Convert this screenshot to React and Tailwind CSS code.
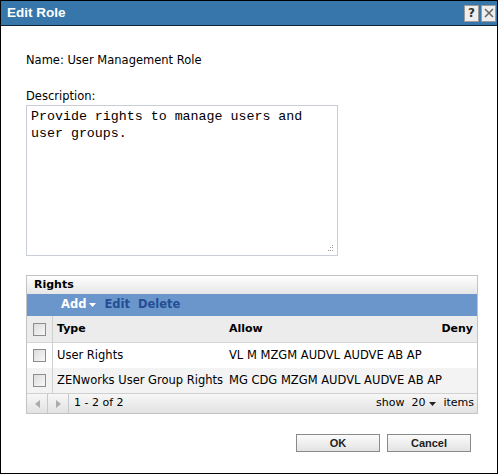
import React from 'react';

const Check = () => (
  <span className="inline-block w-[13px] h-[13px] border border-[#8d8d8d] bg-gradient-to-br from-[#dcdcdc] to-[#f8f8f8]" />
);

const rows = [
  { type: 'User Rights', allow: 'VL M MZGM AUDVL AUDVE AB AP', bg: 'bg-white' },
  { type: 'ZENworks User Group Rights', allow: 'MG CDG MZGM AUDVL AUDVE AB AP', bg: 'bg-[#f3f3f3]' }
];

export default function App() {
  return (
    <div
      className="w-[498px] h-[474px] border border-black bg-white flex flex-col text-[11.5px] text-black"
      style={{ fontFamily: '"DejaVu Sans", Verdana, sans-serif' }}
    >
      {/* title bar */}
      <div className="h-[25px] bg-[#3676aa] border-b border-[#0f2238] flex items-center justify-between pl-[6px] pr-[1px]">
        <span
          className="text-white text-[13.5px] font-bold"
          style={{ fontFamily: '"Liberation Sans", Arial, sans-serif' }}
        >
          Edit Role
        </span>
        <div className="flex gap-[2px]">
          <span className="w-[15px] h-[17px] bg-[#eeeeee] border border-[#9a9a9a] flex items-center justify-center text-[12px] font-bold text-[#333]">?</span>
          <span className="w-[15px] h-[17px] bg-[#eeeeee] border border-[#9a9a9a] flex items-center justify-center">
            <svg width="10" height="10" viewBox="0 0 10 10">
              <path d="M1 1L9 9M9 1L1 9" stroke="#666" strokeWidth="1.6" />
            </svg>
          </span>
        </div>
      </div>

      <div className="flex-1 flex flex-col px-[25px] pt-[27px]">
        <div className="h-[14px] leading-[14px]">Name: User Management Role</div>

        <div className="mt-[22px] h-[14px] leading-[14px]">Description:</div>
        <div className="mt-[2px] w-[312px] h-[151px] border border-[#c9ced6] relative px-[4px] pt-[2px]">
          <div
            className="text-[13.3px] leading-[17px] text-black"
            style={{ fontFamily: '"Liberation Mono", "Courier New", monospace' }}
          >
            Provide rights to manage users and
            <br />
            user groups.
          </div>
          <svg className="absolute right-[3px] bottom-[3px]" width="7" height="7" viewBox="0 0 7 7">
            <rect x="5" y="0" width="1" height="1" fill="#999" />
            <rect x="3" y="2" width="1" height="1" fill="#999" />
            <rect x="5" y="2" width="1" height="1" fill="#999" />
            <rect x="1" y="5" width="1" height="1" fill="#999" />
            <rect x="3" y="5" width="1" height="1" fill="#999" />
            <rect x="5" y="5" width="1" height="1" fill="#999" />
          </svg>
        </div>

        {/* Rights panel */}
        <div className="mt-[19px] w-[452px] border border-[#c3c3c3] flex flex-col">
          <div className="h-[18px] bg-gradient-to-b from-white to-[#e6e6e6] flex items-center pl-[7px] font-bold text-[11px] text-black">
            Rights
          </div>
          <div className="h-[22px] bg-[#6b96cc] flex items-center pl-[34px] gap-[8px] font-bold text-[11.5px]">
            <span className="text-white flex items-center gap-[3px]">
              Add
              <svg width="7" height="4" viewBox="0 0 7 4"><path d="M0 0H7L3.5 4Z" fill="white" /></svg>
            </span>
            <span className="text-[#244e94]">Edit</span>
            <span className="text-[#244e94]">Delete</span>
          </div>
          <div className="h-[27px] bg-[#ececec] flex items-center border-b border-[#d4d4d4] font-bold text-[11px]">
            <div className="w-[26px] h-full flex items-center justify-center border-r border-[#d0d0d0]">
              <Check />
            </div>
            <div className="w-[176px] pl-[4px]">Type</div>
            <div className="flex-1">Allow</div>
            <div className="pr-[4px]">Deny</div>
          </div>
          {rows.map(r => (
            <div key={r.type} className={`h-[25px] flex items-center ${r.bg}`}>
              <div className="w-[26px] h-full flex items-center justify-center border-r border-[#d0d0d0]">
                <Check />
              </div>
              <div className="w-[176px] pl-[4px] whitespace-nowrap">{r.type}</div>
              <div className="flex-1 whitespace-nowrap">{r.allow}</div>
            </div>
          ))}
          <div className="h-[20px] bg-gradient-to-b from-[#f7f7f7] to-[#e2e2e2] border-t border-[#d0d0d0] flex items-center text-[11px]">
            <div className="w-[21px] h-full flex items-center justify-center border-r border-[#c8c8c8]">
              <svg width="5" height="8" viewBox="0 0 5 8"><path d="M5 0V8L0 4Z" fill="#aaa" /></svg>
            </div>
            <div className="w-[21px] h-full flex items-center justify-center border-r border-[#c8c8c8]">
              <svg width="5" height="8" viewBox="0 0 5 8"><path d="M0 0V8L5 4Z" fill="#aaa" /></svg>
            </div>
            <div className="flex-1 pl-[5px]">1 - 2 of 2</div>
            <div className="flex items-center pr-[3px] gap-[7px]">
              <span>show</span>
              <span className="flex items-center gap-[4px]">
                20
                <svg width="7" height="4" viewBox="0 0 7 4"><path d="M0 0H7L3.5 4Z" fill="#222" /></svg>
              </span>
              <span>items</span>
            </div>
          </div>
        </div>

        <div className="mt-[20px] flex justify-end gap-[7px] pr-[1px]">
          {['OK', 'Cancel'].map(b => (
            <button
              key={b}
              className="w-[84px] h-[18px] border border-[#8a8a8a] bg-gradient-to-b from-[#fbfbfb] to-[#e3e3e3] text-[11px] font-bold text-[#222] leading-none"
              style={{ fontFamily: '"Liberation Sans", Arial, sans-serif' }}
            >
              {b}
            </button>
          ))}
        </div>
      </div>
    </div>
  );
}
